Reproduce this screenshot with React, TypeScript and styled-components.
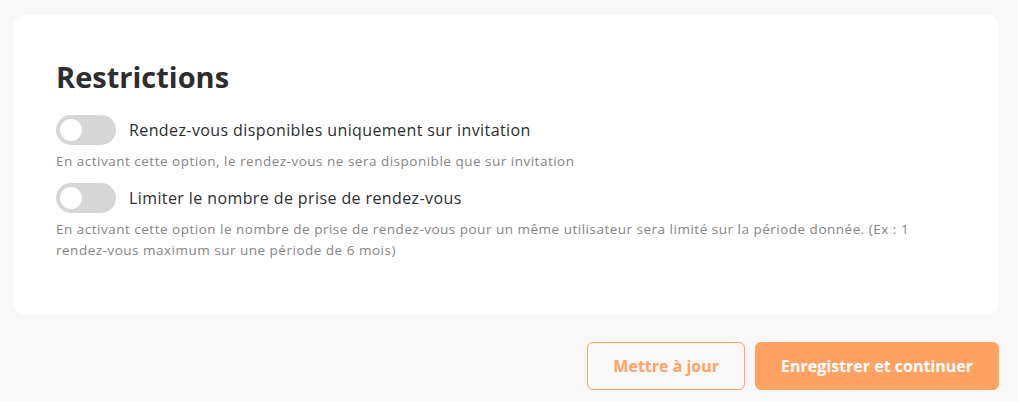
import React, { useState } from "react";
import styled, { createGlobalStyle } from "styled-components";

const GlobalStyle = createGlobalStyle`
  body {
    margin: 0;
    background: #f8f8f8;
    font-family: "Open Sans", "Noto Sans", sans-serif;
  }
`;

const Page = styled.div`
  padding: 15px 19px 0 13px;
  display: flex;
  flex-direction: column;
`;

const Card = styled.section`
  background: #ffffff;
  border-radius: 12px;
  padding: 42px 43px 54px;
`;

const Title = styled.h2`
  margin: 0 0 18px;
  font-size: 29px;
  line-height: 40px;
  font-weight: 700;
  color: #2d2d2d;
`;

const Option = styled.div`
  display: flex;
  flex-direction: column;
  & + & {
    margin-top: 11px;
  }
`;

const ToggleRow = styled.label`
  display: flex;
  align-items: center;
  gap: 13px;
  cursor: pointer;
`;

const Track = styled.span<{ $on: boolean }>`
  position: relative;
  flex: 0 0 auto;
  width: 60px;
  height: 30px;
  border-radius: 15px;
  background: ${(p) => (p.$on ? "#ffa263" : "#d6d6d6")};
  transition: background 0.2s;

  &::after {
    content: "";
    position: absolute;
    top: 4px;
    left: ${(p) => (p.$on ? "34px" : "4px")};
    width: 22px;
    height: 22px;
    border-radius: 50%;
    background: #ffffff;
    transition: left 0.2s;
  }
`;

const Label = styled.span`
  font-size: 16px;
  letter-spacing: 0.4px;
  color: #2d2d2d;
`;

const Help = styled.p`
  margin: 6px 0 0;
  font-size: 13.5px;
  letter-spacing: 0.5px;
  line-height: 21px;
  color: #858585;
`;

const Actions = styled.div`
  display: flex;
  justify-content: flex-end;
  gap: 10px;
  padding-top: 27px;
`;

const Button = styled.button<{ $primary?: boolean }>`
  height: 48px;
  padding: 0 25px;
  border-radius: 6px;
  font-family: inherit;
  font-size: 16px;
  font-weight: 700;
  cursor: pointer;
  border: 1px solid #ffa263;
  background: ${(p) => (p.$primary ? "#ffa263" : "transparent")};
  color: ${(p) => (p.$primary ? "#ffffff" : "#ffa263")};
`;

const options = [
  {
    label: "Rendez-vous disponibles uniquement sur invitation",
    help: "En activant cette option, le rendez-vous ne sera disponible que sur invitation",
  },
  {
    label: "Limiter le nombre de prise de rendez-vous",
    help: "En activant cette option le nombre de prise de rendez-vous pour un même utilisateur sera limité sur la période donnée. (Ex : 1 rendez-vous maximum sur une période de 6 mois)",
  },
];

const App: React.FC = () => {
  const [flags, setFlags] = useState<boolean[]>([false, false]);

  return (
    <Page>
      <GlobalStyle />
      <Card>
        <Title>Restrictions</Title>
        {options.map((opt, index) => (
          <Option key={index}>
            <ToggleRow
              onClick={() =>
                setFlags((prev) => prev.map((f, i) => (i === index ? !f : f)))
              }
            >
              <Track $on={flags[index]} />
              <Label>{opt.label}</Label>
            </ToggleRow>
            <Help>{opt.help}</Help>
          </Option>
        ))}
      </Card>
      <Actions>
        <Button>Mettre à jour</Button>
        <Button $primary>Enregistrer et continuer</Button>
      </Actions>
    </Page>
  );
};

export default App;
